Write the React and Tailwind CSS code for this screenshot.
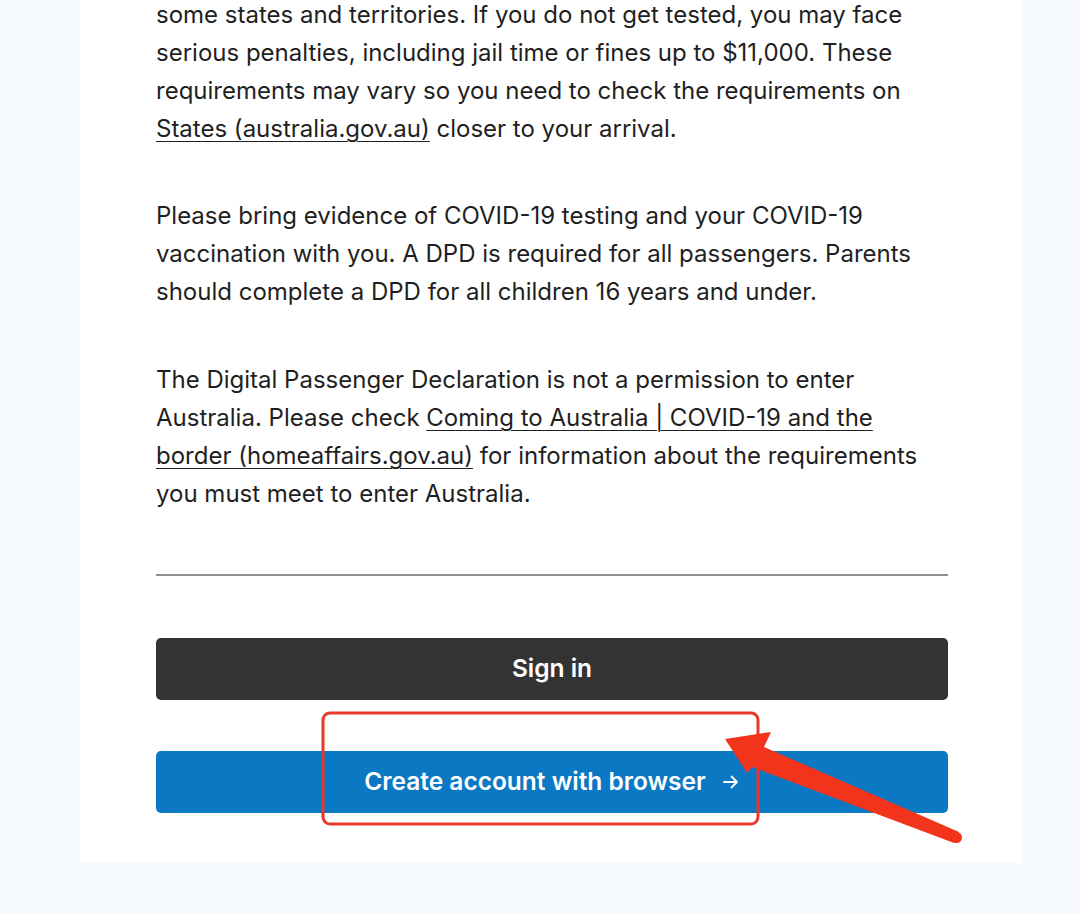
export default function App() {
  const link = "underline underline-offset-[4px] decoration-[1.2px]";
  return (
    <div className="relative min-h-[913px] w-[1080px] overflow-hidden bg-[#f5f8fc]" style={{ fontFamily: "Inter, 'Open Sans', sans-serif" }}>
      <div className="ml-[80px] w-[942px] bg-white pl-[76px] pr-[74px] pb-[50px]">
        <div className="-mt-[4px] text-[24px] leading-[38px] text-[#1f1f1f]">
          <p>
            some states and territories. If you do not get tested, you may face<br />
            serious penalties, including jail time or fines up to $11,000. These<br />
            requirements may vary so you need to check the requirements on<br />
            <span className={link}>States (australia.gov.au)</span> closer to your arrival.
          </p>
          <p className="mt-[49px]">
            Please bring evidence of COVID-19 testing and your COVID-19<br />
            vaccination with you. A DPD is required for all passengers. Parents<br />
            should complete a DPD for all children 16 years and under.
          </p>
          <p className="mt-[50px]">
            The Digital Passenger Declaration is not a permission to enter<br />
            Australia. Please check <span className={link}>Coming to Australia | COVID-19 and the </span><br />
            <span className={link}>border (homeaffairs.gov.au)</span> for information about the requirements<br />
            you must meet to enter Australia.
          </p>
        </div>
        <div className="mt-[61px] h-[1.5px] bg-[#8f8f8f]" />
        <button className="mt-[62px] flex h-[62px] w-full items-center justify-center rounded-[5px] bg-[#333333] text-[24.5px] font-semibold text-white">
          Sign in
        </button>
        <button className="mt-[51px] flex h-[62px] w-full items-center justify-center gap-[16px] rounded-[5px] bg-[#0a78c3] text-[24.5px] font-semibold text-white">
          <span>Create account with browser</span>
          <svg width="18" height="18" viewBox="0 0 18 18" fill="none" stroke="white" strokeWidth="1.8" strokeLinecap="round" strokeLinejoin="round">
            <path d="M2 9h13M9.5 3.5 15 9l-5.5 5.5" />
          </svg>
        </button>
      </div>
      <svg className="pointer-events-none absolute left-0 top-0" width="1080" height="913" viewBox="0 0 1080 913">
        <rect x="323" y="713" width="435" height="111" rx="7" fill="none" stroke="#e8392a" strokeWidth="3" />
        <polygon points="725,739 771,732 764,747 959,832 954,843 752,767 747,773" fill="#f2341d" />
        <circle cx="956.5" cy="837.5" r="5.5" fill="#f2341d" />
      </svg>
    </div>
  );
}
